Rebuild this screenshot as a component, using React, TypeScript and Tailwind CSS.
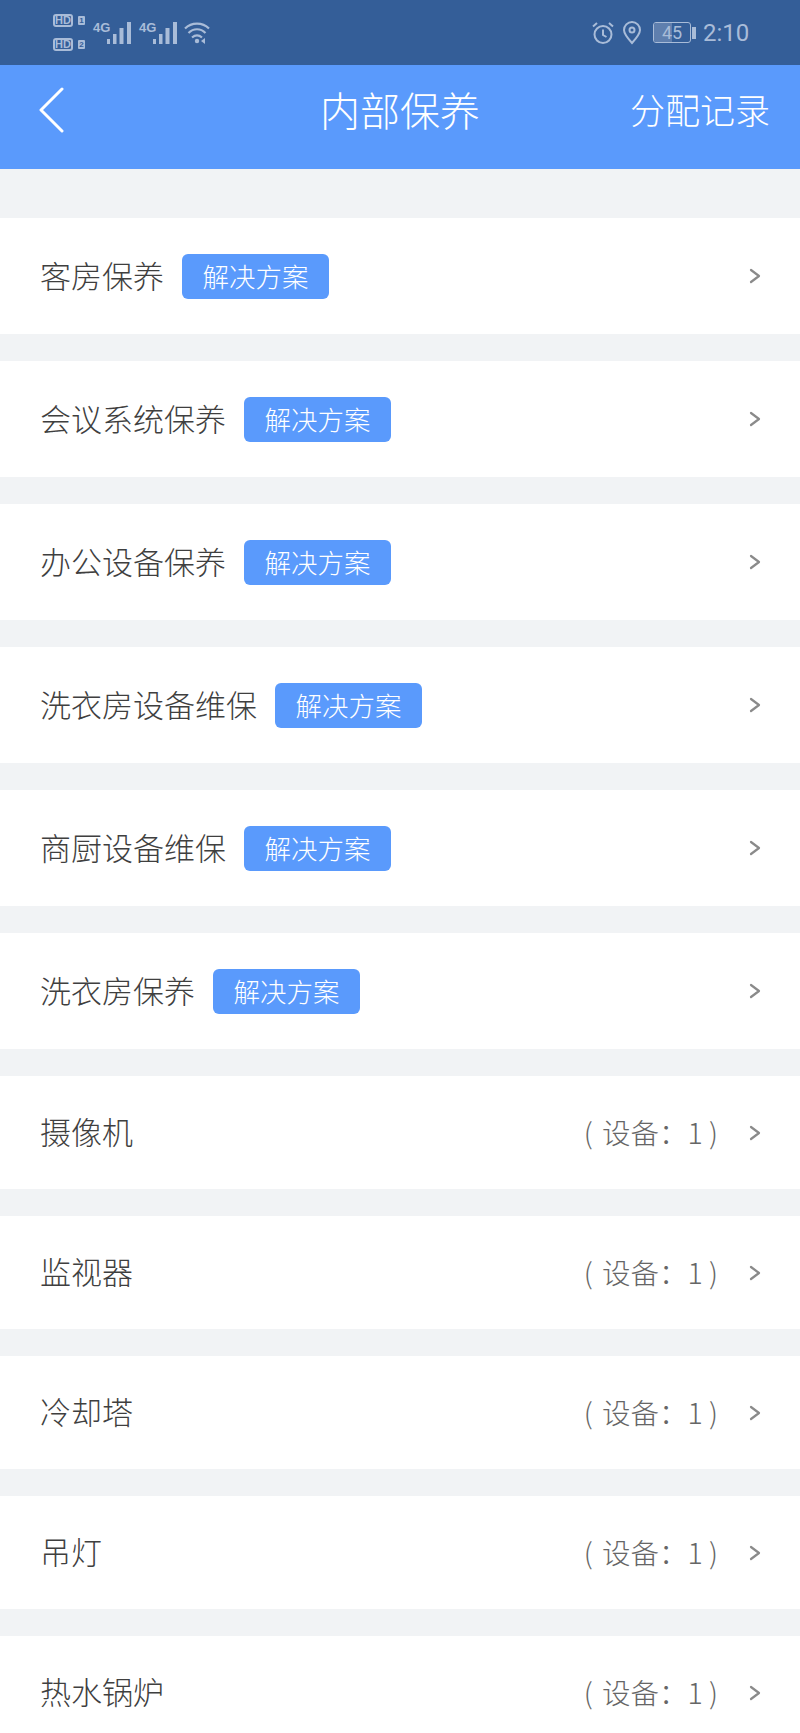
import React from 'react';

const cjk = "font-['Noto_Sans_CJK_SC','Noto_Sans',sans-serif]";

const plans = ['客房保养', '会议系统保养', '办公设备保养', '洗衣房设备维保', '商厨设备维保', '洗衣房保养'];
const devices = ['摄像机', '监视器', '冷却塔', '吊灯', '热水锅炉'];

const Signal = () => (
  <div className="flex items-start">
    <span className="w-[14px] text-[13px] leading-[12px] font-['Liberation_Sans_Narrow','Liberation_Sans',sans-serif] font-bold">4G</span>
    <svg width="24" height="22" viewBox="0 0 24 22" fill="#a9bcd8">
      <rect x="0" y="17" width="3" height="5" />
      <rect x="6" y="12" width="3.500" height="10" />
      <rect x="12.500" y="6" width="4" height="16" />
      <rect x="20" y="0" width="4" height="22" />
    </svg>
  </div>
);

const StatusBar = () => (
  <div className="h-[65px] bg-[#345e98] flex items-center justify-between pl-[53px] pr-[49px] text-[#a9bcd8]">
    <div className="flex items-center">
      <div className="flex flex-col gap-[11px] w-[32px]">
        {['1', '2'].map((n) => (
          <div key={n} className="flex items-center gap-[5px]">
            <span className="w-[20px] h-[13px] rounded-[3px] border-2 border-[#a9bcd8] text-[11px] leading-[9px] font-bold text-center font-['Liberation_Sans_Narrow','Liberation_Sans',sans-serif]">HD</span>
            <span className="w-[7px] h-[9px] rounded-[1px] bg-[#a9bcd8] text-[#345e98] text-[8px] leading-[9px] font-bold text-center font-['Liberation_Sans',sans-serif]">{n}</span>
          </div>
        ))}
      </div>
      <div className="ml-[8px]"><Signal /></div>
      <div className="ml-[8px]"><Signal /></div>
      <svg className="ml-[7px]" width="26" height="22" viewBox="0 0 26 22" fill="none" stroke="#a9bcd8" strokeWidth="2.200">
        <path d="M1 6.500C7.500 0 18.500 0 25 6.500" />
        <path d="M4.500 11C9.500 6 16.500 6 21.500 11" />
        <path d="M8 15.500C11 13 15 13 18 15.500" />
        <circle cx="13" cy="19" r="2.200" fill="#a9bcd8" stroke="none" />
        <path d="M17 19l4-3v6z" fill="#a9bcd8" stroke="none" />
      </svg>
    </div>
    <div className="flex items-center">
      <svg width="24" height="24" viewBox="0 0 24 24" fill="none" stroke="#a9bcd8" strokeWidth="2">
        <circle cx="12" cy="13.500" r="8.500" />
        <path d="M12 8.500v5.500l3.500 2" />
        <path d="M2 5.500L6 2M22 5.500L18 2" />
      </svg>
      <svg className="ml-[7px]" width="20" height="24" viewBox="0 0 20 24" fill="none" stroke="#a9bcd8" strokeWidth="2">
        <path d="M10 22C5 16.500 2 13 2 9a8 8 0 0 1 16 0c0 4-3 7.500-8 13z" />
        <circle cx="10" cy="9" r="2.500" />
      </svg>
      <div className="ml-[11px] w-[38px] h-[21px] rounded-[3px] border border-[#a9bcd8] flex overflow-hidden relative">
        <div className="w-[50%] bg-[#5f7fae]" />
        <span className="absolute inset-0 text-center text-[18px] leading-[19px] font-['Roboto',sans-serif]">45</span>
      </div>
      <div className="ml-[1px] w-[4px] h-[12px] bg-[#a9bcd8]" />
      <span className="ml-[7px] w-[48px] text-[24px] leading-[28px] font-['Roboto',sans-serif]">2:10</span>
    </div>
  </div>
);

const Header = () => (
  <div className={`h-[104px] pb-[17px] bg-[#5a9afc] relative flex items-center justify-center text-white ${cjk}`}>
    <svg className="absolute left-[38px] top-[22px]" width="28" height="46" viewBox="0 0 28 46" fill="none" stroke="#fff" strokeWidth="3" strokeLinecap="round" strokeLinejoin="round">
      <path d="M24 2L3 23l21 21" />
    </svg>
    <span className="text-[40px] leading-[48px] font-light">内部保养</span>
    <span className="absolute right-[30px] top-[22px] text-[35px] leading-[44px] font-light">分配记录</span>
  </div>
);

const Arrow = () => (
  <svg width="12" height="16" viewBox="0 0 12 16" fill="none" stroke="#8a8a8a" strokeWidth="2.200" strokeLinecap="round" strokeLinejoin="round">
    <path d="M2 2l8 6-8 6" />
  </svg>
);

export default function App() {
  return (
    <div className={`w-[800px] h-[1733px] overflow-hidden bg-[#f1f3f5] ${cjk}`}>
      <StatusBar />
      <Header />
      <div className="pt-[49px] flex flex-col gap-[27px]">
        {plans.map((name) => (
          <div key={name} className="h-[116px] bg-white shrink-0 flex items-center justify-between pl-[40px] pr-[39px]">
            <div className="flex items-center gap-[18px]">
              <span className="mb-[2px] text-[31px] leading-[40px] text-[#3f3f3f] font-light">{name}</span>
              <span className="w-[147px] h-[45px] rounded-[6px] bg-[#5a9afc] text-white text-[26.500px] leading-[43px] font-light text-center">解决方案</span>
            </div>
            <Arrow />
          </div>
        ))}
        {devices.map((name) => (
          <div key={name} className="h-[113px] bg-white shrink-0 flex items-center justify-between pl-[40px] pr-[39px]">
            <span className="mb-[3px] text-[31px] leading-[40px] text-[#3f3f3f] font-light">{name}</span>
            <div className="flex items-center">
              <span className="mb-[2px] text-[28.500px] leading-[40px] text-[#666666] font-light mr-[31px]">
                <span className="mr-[3px]">(</span> 设备：1 )
              </span>
              <Arrow />
            </div>
          </div>
        ))}
      </div>
    </div>
  );
}
